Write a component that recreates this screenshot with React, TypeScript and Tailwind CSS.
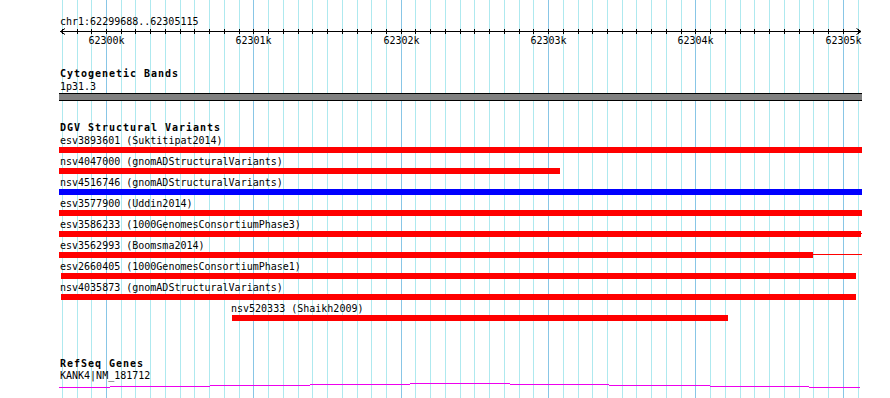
const TRACK_LEFT = 59;
const TRACK_WIDTH = 803;

// grid columns every 100bp, a darker one every 1000bp
const grid = Array.from({ length: 55 }, (_, i) => i - 3).map((k) => ({
  k,
  x: Math.floor(106.5 + 14.736 * k),
}));

const majors = [
  { label: "62300k", k: 0 },
  { label: "62301k", k: 10 },
  { label: "62302k", k: 20 },
  { label: "62303k", k: 30 },
  { label: "62304k", k: 40 },
  { label: "62305k", k: 50 },
];

type Variant = {
  id: string;
  source: string;
  start: number;
  end: number;
  color: string;
  tail?: boolean;
  labelX?: number;
};

const variants: Variant[] = [
  { id: "esv3893601", source: "Suktitipat2014", start: -10, end: 803, color: "bg-[#ff0000]" },
  { id: "nsv4047000", source: "gnomADStructuralVariants", start: 0, end: 501, color: "bg-[#ff0000]" },
  { id: "nsv4516746", source: "gnomADStructuralVariants", start: -10, end: 803, color: "bg-[#0000ff]" },
  { id: "esv3577900", source: "Uddin2014", start: -10, end: 803, color: "bg-[#ff0000]" },
  { id: "esv3586233", source: "1000GenomesConsortiumPhase3", start: 0, end: 802, color: "bg-[#ff0000]", tail: true },
  { id: "esv3562993", source: "Boomsma2014", start: 0, end: 754, color: "bg-[#ff0000]", tail: true },
  { id: "esv2660405", source: "1000GenomesConsortiumPhase1", start: 2, end: 797, color: "bg-[#ff0000]" },
  { id: "nsv4035873", source: "gnomADStructuralVariants", start: 2, end: 797, color: "bg-[#ff0000]" },
  { id: "nsv520333", source: "Shaikh2009", start: 173, end: 669, color: "bg-[#ff0000]", labelX: 172 },
];

// KANK4 intron line, page coords [x0, x1, y]
const geneSegments: [number, number, number][] = [
  [59, 110, 387],
  [110, 210, 386],
  [210, 310, 385],
  [310, 410, 384],
  [410, 510, 383],
  [510, 609, 384],
  [609, 710, 385],
  [710, 809, 386],
  [809, 860, 387],
];

function VariantRow({ v }: { v: Variant }) {
  return (
    <div className="h-[21px]">
      <div className="h-[11px] whitespace-pre" style={{ paddingLeft: v.labelX ?? 1 }}>
        {v.id} ({v.source})
      </div>
      <div className="relative mt-px h-[6px]">
        <div className={`absolute top-0 h-[6px] ${v.color}`} style={{ left: v.start, width: v.end - v.start }} />
        {v.tail && (
          <div className="absolute top-[2px] h-px bg-[#ff0000]" style={{ left: v.end, width: TRACK_WIDTH - v.end }} />
        )}
      </div>
    </div>
  );
}

export default function App() {
  return (
    <div className="relative h-[398px] w-[890px] overflow-hidden bg-white font-['DejaVu_Sans_Mono','Liberation_Mono',monospace] text-[10px] leading-[11px] text-black">
      <svg className="absolute left-0 top-0" width={890} height={398}>
        {grid.map((g) => (
          <rect key={g.k} x={g.x} y={0} width={1} height={398} fill={g.k % 10 === 0 ? "#88c6e6" : "#aee9ef"} />
        ))}
      </svg>

      <div className="relative ml-[59px] w-[803px] overflow-hidden pt-[16px]">
        {/* ruler */}
        <div className="pl-px">chr1:62299688..62305115</div>
        <svg className="block" width={TRACK_WIDTH} height={8}>
          <rect x={1} y={4} width={801} height={1} fill="#000" />
          {grid.map((g) => (
            <rect key={g.k} x={g.x - TRACK_LEFT} y={2} width={1} height={5} fill="#000" />
          ))}
          <polyline points="6,1.5 1.5,4.5 6,7.5" fill="none" stroke="#000" strokeWidth={1} />
          <polyline points="797.5,1.5 802,4.5 797.5,7.5" fill="none" stroke="#000" strokeWidth={1} />
        </svg>
        <div className="relative h-[11px]">
          {majors.map((m) => {
            const x = grid.find((g) => g.k === m.k)!.x - TRACK_LEFT;
            return (
              <span key={m.label} className="absolute top-0 w-[36px] text-center" style={{ left: x - 17.5 }}>
                {m.label}
              </span>
            );
          })}
        </div>

        {/* cytogenetic bands */}
        <section className="mt-[22px]">
          <h2 className="pl-px font-bold tracking-[0.98px]">Cytogenetic Bands</h2>
          <div className="mt-[2px] pl-px">1p31.3</div>
          <div className="mt-px h-[8px] border-y border-black bg-[#808080]" />
        </section>

        {/* DGV */}
        <section className="mt-[21px]">
          <h2 className="pl-px font-bold tracking-[0.98px]">DGV Structural Variants</h2>
          <div className="mt-[2px]">
            {variants.map((v) => (
              <VariantRow key={v.id} v={v} />
            ))}
          </div>
        </section>

        {/* RefSeq */}
        <section className="mt-[34px]">
          <h2 className="pl-px font-bold tracking-[0.98px]">RefSeq Genes</h2>
          <div className="mt-px pl-px">KANK4|NM_181712</div>
          <svg className="block" width={TRACK_WIDTH} height={9}>
            {geneSegments.map(([x0, x1, y]) => (
              <rect key={x0} x={x0 - TRACK_LEFT} y={y - 381} width={x1 - x0} height={1} fill="#ee00ee" />
            ))}
          </svg>
        </section>
      </div>
    </div>
  );
}
